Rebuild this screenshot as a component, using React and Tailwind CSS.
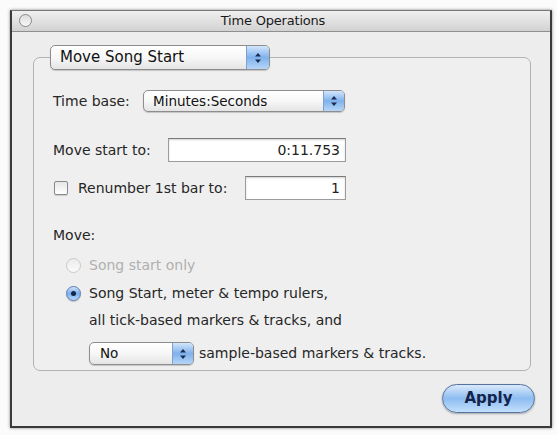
import React from 'react';

const Arrows = () => (
  <svg width="8" height="12" viewBox="0 0 8 12">
    <path d="M4 1 L7 4.5 L1 4.5 Z" fill="#1b2b50" />
    <path d="M4 11 L7 7.5 L1 7.5 Z" fill="#1b2b50" />
  </svg>
);

const Popup = ({ label, className, textClass, arrowClass }) => (
  <div className={`flex items-stretch rounded-[5px] border border-[#8d8d8d] bg-gradient-to-b from-white via-[#f7f7f7] to-[#e4e4e4] shadow-[0_1px_1px_rgba(0,0,0,0.18)] overflow-hidden ${className}`}>
    <div className={`flex-1 flex items-center text-[#111] ${textClass}`}>{label}</div>
    <div className={`flex items-center justify-center border-l border-[#7f9fcc] bg-gradient-to-b from-[#d3e6fb] via-[#7fb1ec] to-[#b6d6f8] ${arrowClass}`}>
      <Arrows />
    </div>
  </div>
);

const TextField = ({ value, className }) => (
  <div className={`flex items-center justify-end pr-[5px] bg-white border border-[#9c9c9c] border-t-[#7a7a7a] shadow-[inset_0_1px_2px_rgba(0,0,0,0.18)] text-[14px] text-[#222] ${className}`}>
    {value}
  </div>
);

export default function App() {
  return (
    <div className="w-[557px] h-[435px] bg-[#fbfbfb] pt-[10px] pl-[10px] font-['DejaVu_Sans',sans-serif] text-[14px] text-[#262626]">
      <div className="w-[542px] h-[418px] flex flex-col bg-[#ededed] border-[#3a3a3a] border-l-2 border-r-2 border-b-2 border-t border-t-[#777] shadow-[0_0_3px_rgba(0,0,0,0.45)]">
        {/* Title bar */}
        <div className="relative h-[21px] flex items-center justify-center pr-[16px] bg-gradient-to-b from-[#f0f0f0] to-[#d2d2d2] border-b border-[#8f8f8f]">
          <div className="absolute left-[7px] top-[3px] w-[13px] h-[13px] rounded-full border border-[#8a8a8a] bg-gradient-to-b from-[#dcdcdc] to-[#f8f8f8]" />
          <span className="text-[13px] text-[#1a1a1a] tracking-[-0.2px]">Time Operations</span>
        </div>

        <div className="pt-[13px] pl-[21px]">
          <fieldset className="w-[498px] h-[326px] border border-[#b3b3b3] rounded-[7px] bg-[#efefef]">
            <legend className="ml-[16px] px-0">
              <Popup
                label="Move Song Start"
                className="w-[220px] h-[25px]"
                textClass="pl-[9px] text-[15px]"
                arrowClass="w-[23px]"
              />
            </legend>
            <div className="pl-[19px] pt-[20px]">
              <div className="flex items-center h-[22px]">
                <span className="w-[90px]">Time base:</span>
                <Popup
                  label="Minutes:Seconds"
                  className="w-[202px] h-[22px]"
                  textClass="pl-[9px] text-[13.5px]"
                  arrowClass="w-[21px]"
                />
              </div>
              <div className="flex items-center h-[24px] mt-[26px]">
                <span className="w-[115px]">Move start to:</span>
                <TextField value="0:11.753" className="w-[178px] h-[24px]" />
              </div>
              <div className="flex items-center h-[24px] mt-[14px]">
                <div className="ml-[1px] w-[14px] h-[14px] rounded-[2px] border border-[#8a8a8a] bg-gradient-to-b from-[#e6e6e6] to-white shadow-[0_1px_1px_rgba(0,0,0,0.15)]" />
                <span className="ml-[10px] w-[167px]">Renumber 1st bar to:</span>
                <TextField value="1" className="w-[101px] h-[24px]" />
              </div>
              <div className="h-[20px] mt-[25px] flex items-center">Move:</div>
              <div className="h-[20px] mt-[10px] flex items-center pl-[13px]">
                <div className="w-[15px] h-[15px] rounded-full border border-[#c9c9c9] bg-gradient-to-b from-[#ececec] to-[#fafafa]" />
                <span className="ml-[8px] text-[#b0b0b0]">Song start only</span>
              </div>
              <div className="h-[20px] mt-[8px] flex items-center pl-[13px]">
                <div className="w-[15px] h-[15px] rounded-full border border-[#5a7db3] bg-gradient-to-b from-[#cfe3fa] via-[#79aeea] to-[#b8d8f8] flex items-center justify-center shadow-[0_1px_1px_rgba(0,0,0,0.2)]">
                  <div className="w-[5px] h-[5px] rounded-full bg-[#16264a]" />
                </div>
                <span className="ml-[8px]">Song Start, meter &amp; tempo rulers,</span>
              </div>
              <div className="h-[20px] mt-[7px] flex items-center pl-[36px]">
                all tick-based markers &amp; tracks, and
              </div>
              <div className="h-[23px] mt-[12px] flex items-center pl-[36px]">
                <Popup
                  label="No"
                  className="w-[105px] h-[23px]"
                  textClass="pl-[10px] text-[13.5px]"
                  arrowClass="w-[21px]"
                />
                <span className="ml-[5px]">sample-based markers &amp; tracks.</span>
              </div>
            </div>
          </fieldset>
        </div>

        <div className="flex justify-end pr-[15px] mt-[13px]">
          <button className="w-[93px] h-[29px] rounded-full border-[1.5px] border-[#56729f] bg-gradient-to-b from-[#dbeafb] via-[#8dbcf0] to-[#c3e0fb] shadow-[0_1px_2px_rgba(0,0,0,0.3)] text-[15px] font-bold text-[#14244a] font-['DejaVu_Sans',sans-serif]">
            Apply
          </button>
        </div>
      </div>
    </div>
  );
}
